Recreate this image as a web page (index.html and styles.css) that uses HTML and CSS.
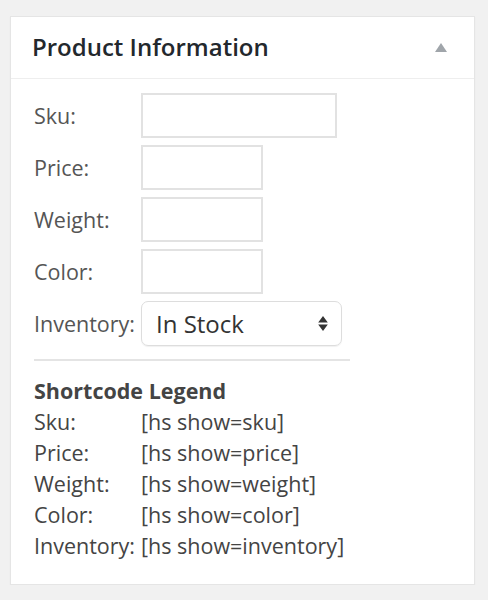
FILE: index.html
```html
<!DOCTYPE html>
<html>
<head>
<meta charset="utf-8">
<link rel="stylesheet" href="styles.css">
</head>
<body>
<div class="panel">
  <div class="panel-head">
    <h2 class="panel-title">Product Information</h2>
    <span class="toggle"></span>
  </div>
  <div class="panel-body">
    <div class="fields">
      <label class="lbl">Sku:</label><input class="inp inp-wide" type="text">
      <label class="lbl">Price:</label><input class="inp" type="text">
      <label class="lbl">Weight:</label><input class="inp" type="text">
      <label class="lbl">Color:</label><input class="inp" type="text">
      <label class="lbl">Inventory:</label>
      <div class="select">
        <span>In Stock</span>
        <svg class="arrows" width="10" height="17" viewBox="0 0 10 17"><path d="M5 1 L9.8 7.5 H0.2 Z M5 16 L9.8 9.5 H0.2 Z" fill="#333"/></svg>
      </div>
    </div>
    <div class="sep"></div>
    <div class="legend-title">Shortcode Legend</div>
    <div class="legend">
      <span>Sku:</span><span>[hs show=sku]</span>
      <span>Price:</span><span>[hs show=price]</span>
      <span>Weight:</span><span>[hs show=weight]</span>
      <span>Color:</span><span>[hs show=color]</span>
      <span>Inventory:</span><span>[hs show=inventory]</span>
    </div>
  </div>
</div>
</body>
</html>
```
FILE: styles.css
```css
html, body {
  margin: 0;
  padding: 0;
  background: #f1f1f1;
}
body {
  padding: 16px 13px 0 10px;
  font-family: "Open Sans", "Liberation Sans", sans-serif;
  color: #444;
}
.panel {
  width: 463px;
  height: 567px;
  background: #fff;
  border: 1px solid #e5e5e5;
  box-shadow: 0 1px 1px rgba(0,0,0,0.05);
}
.panel-head {
  height: 61px;
  border-bottom: 1px solid #eee;
  display: flex;
  align-items: center;
  justify-content: space-between;
  padding: 0 27px 0 21px;
}
.panel-title {
  margin: 0;
  font-size: 24px;
  font-weight: 600;
  color: #23282d;
  position: relative;
  top: -1px;
}
.toggle {
  width: 0;
  height: 0;
  border-left: 6px solid transparent;
  border-right: 6px solid transparent;
  border-bottom: 9px solid #a0a5aa;
}
.panel-body {
  padding: 14px 0 0 23px;
}
.fields {
  display: grid;
  grid-template-columns: 107px auto;
  row-gap: 7px;
  align-items: center;
  justify-items: start;
}
.lbl {
  font-size: 21.5px;
  color: #555;
}
.inp {
  box-sizing: border-box;
  width: 122px;
  height: 45px;
  border: 2px solid #e2e2e2;
  margin: 0;
  background: #fff;
}
.inp-wide {
  width: 196px;
}
.select {
  box-sizing: border-box;
  width: 201px;
  height: 45px;
  border: 1.5px solid #ddd;
  border-radius: 7px;
  display: flex;
  align-items: center;
  justify-content: space-between;
  padding: 0 13px 0 14px;
  font-size: 24px;
  color: #333;
  box-shadow: 0 1px 1px rgba(0,0,0,0.06);
}
.arrows {
  display: block;
}
.sep {
  width: 316px;
  height: 2px;
  background: #e4e4e4;
  margin: 13px 0 14px;
}
.legend-title {
  font-size: 21.5px;
  font-weight: 700;
  color: #444;
  line-height: 31px;
}
.legend {
  display: grid;
  grid-template-columns: 107px auto;
  font-size: 21.5px;
  line-height: 31px;
  color: #444;
}
```
